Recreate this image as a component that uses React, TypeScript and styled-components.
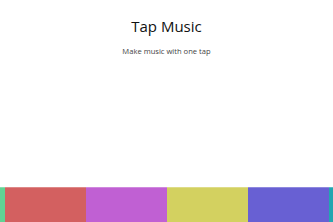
import styled, { createGlobalStyle } from "styled-components";

const GlobalStyle = createGlobalStyle`
  * {
    margin: 0;
    padding: 0;
    box-sizing: border-box;
  }
  html, body {
    height: 100%;
    background: #fff;
    overflow: hidden;
  }
  body {
    font-family: "Open Sans", "DejaVu Sans", sans-serif;
  }
  #root {
    height: 100%;
  }
`;

const AppContainer = styled.div`
  height: 100vh;
  display: flex;
  flex-direction: column;
  justify-content: space-between;
  overflow: hidden;
`;

const Header = styled.header`
  display: flex;
  flex-direction: column;
  align-items: center;
  padding-top: 16px;
`;

const Title = styled.h1`
  font-size: 15px;
  font-weight: 500;
  color: #111;
  line-height: 20px;
`;

const Subtitle = styled.p`
  margin-top: 10px;
  font-size: 7.6px;
  color: #444;
  line-height: 10px;
`;

const Pads = styled.div`
  display: flex;
  justify-content: center;
  width: 100%;
`;

const Pad = styled.div<{ $color: string }>`
  flex: 0 0 81px;
  height: 35px;
  background: ${(p) => p.$color};
  box-shadow: inset 0 1px 0 rgba(255, 255, 255, 0.25);
`;

const colors = ["#60d394", "#d36060", "#c060d3", "#d3d160", "#6860d3", "#22a6b0"];

export default function App() {
  return (
    <>
      <GlobalStyle />
      <AppContainer>
        <Header>
          <Title>Tap Music</Title>
          <Subtitle>Make music with one tap</Subtitle>
        </Header>
        <Pads>
          {colors.map((c) => (
            <Pad key={c} $color={c} />
          ))}
        </Pads>
      </AppContainer>
    </>
  );
}
